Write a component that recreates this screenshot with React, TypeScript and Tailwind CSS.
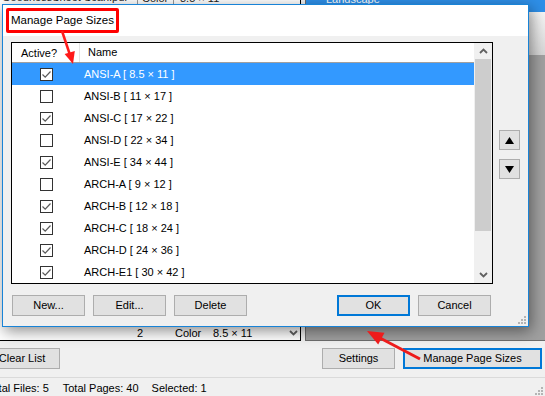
import React from 'react';

const sizes = [
  { name: 'ANSI-A [ 8.5 × 11 ]', on: true },
  { name: 'ANSI-B [ 11 × 17 ]', on: false },
  { name: 'ANSI-C [ 17 × 22 ]', on: true },
  { name: 'ANSI-D [ 22 × 34 ]', on: false },
  { name: 'ANSI-E [ 34 × 44 ]', on: true },
  { name: 'ARCH-A [ 9 × 12 ]', on: false },
  { name: 'ARCH-B [ 12 × 18 ]', on: true },
  { name: 'ARCH-C [ 18 × 24 ]', on: true },
  { name: 'ARCH-D [ 24 × 36 ]', on: true },
  { name: 'ARCH-E1 [ 30 × 42 ]', on: true },
];

function CheckBox({ on }: { on: boolean }) {
  return (
    <div className="flex h-[13px] w-[13px] items-center justify-center border border-[#333333] bg-white">
      {on && (
        <svg width="11" height="11" viewBox="0 0 11 11">
          <path d="M1.5 5.5 L4.2 8.2 L9.5 2.5" fill="none" stroke="#5a5a5a" strokeWidth="1.2" />
        </svg>
      )}
    </div>
  );
}

function Chevron({ down }: { down?: boolean }) {
  return (
    <svg width="9" height="6" viewBox="0 0 9 6" className={down ? 'rotate-180' : ''}>
      <path d="M1 5 L4.5 1.5 L8 5" fill="none" stroke="#606060" strokeWidth="1.8" />
    </svg>
  );
}

function Btn({ children, w, active }: { children: React.ReactNode; w: string; active?: boolean }) {
  return (
    <div
      className={`flex h-[21px] items-center justify-center bg-[#e1e1e1] ${w} ${
        active ? 'border-2 border-[#0078d7]' : 'border border-[#adadad]'
      }`}
    >
      {children}
    </div>
  );
}

function Grip() {
  return (
    <svg width="9" height="9" viewBox="0 0 9 9">
      <rect x="6" y="0" width="2" height="2" fill="#b4b4b4" />
      <rect x="3" y="3" width="2" height="2" fill="#b4b4b4" />
      <rect x="6" y="3" width="2" height="2" fill="#b4b4b4" />
      <rect x="0" y="6" width="2" height="2" fill="#b4b4b4" />
      <rect x="3" y="6" width="2" height="2" fill="#b4b4b4" />
      <rect x="6" y="6" width="2" height="2" fill="#b4b4b4" />
    </svg>
  );
}

export default function App() {
  return (
    <div className="relative h-[396px] w-[545px] overflow-hidden bg-[#f0f0f0] font-['Liberation_Sans',Arial,sans-serif] text-[11px] text-black">
      {/* app behind the dialog */}
      <div className="flex h-[341px]">
        <div className="flex w-[301px] flex-col justify-between border-r border-b border-black bg-white">
          <div className="-mt-[10px] flex h-[14px] items-center text-[#222]">
            <span className="w-[137px] truncate pl-[2px]">GoodnessSheet Scan.pdf</span>
            <span className="h-full w-[36px] border-l border-[#9a9a9a] pl-[4px]">Color</span>
            <span className="h-full flex-1 border-l border-[#9a9a9a] pl-[6px]">8.5 × 11</span>
          </div>
          <div className="flex h-[14px] items-center">
            <span className="w-[145px] pr-[2px] text-right">2</span>
            <span className="w-[30px]"></span>
            <span className="w-[38px]">Color</span>
            <span className="flex-1">8.5 × 11</span>
            <div className="flex w-[14px] justify-center">
              <Chevron down />
            </div>
          </div>
        </div>
        <div className="ml-[4px] flex flex-1 flex-col border-l border-b border-[#6d6d6d]">
          <div className="flex h-[12px] items-start bg-[#2e8fe8] pl-[20px] text-white">
            <span className="-mt-[9px]">Landscape</span>
          </div>
          <div className="h-[43px] bg-gradient-to-b from-[#f5f5f5] to-[#d6d6d6]"></div>
          <div className="flex-1 bg-[#a0a0a0]"></div>
        </div>
      </div>

      <div className="mt-[7px] flex h-[21px]">
        <Btn w="-ml-[16px] w-[76px]">Clear List</Btn>
        <div className="flex-1"></div>
        <Btn w="w-[73px]">Settings</Btn>
        <div className="w-[8px]"></div>
        <Btn w="w-[139px]" active>
          Manage Page Sizes
        </Btn>
        <div className="w-[3px]"></div>
      </div>

      <div className="mt-[8px] flex h-[19px] items-center border-t border-[#dadada] pt-[2px]">
        <span className="-ml-[13px]">Total Files: 5</span>
        <span className="ml-[14px]">Total Pages: 40</span>
        <span className="ml-[13px]">Selected: 1</span>
        <div className="ml-auto mr-[1px] mt-[6px]">
          <Grip />
        </div>
      </div>

      {/* Manage Page Sizes dialog */}
      <div className="absolute left-[2px] top-[4px] flex h-[323px] w-[527px] flex-col border border-[#1883d7] bg-[#f0f0f0] shadow-[2px_4px_14px_rgba(0,0,0,0.45)]">
        <div className="flex h-[31px] items-center bg-white">
          <span className="ml-[3px] -mt-[1px] rounded-[2px] border-[3px] border-[#ff0000] px-[2px] py-[2px] text-[11.5px] leading-[15px]">
            Manage Page Sizes
          </span>
        </div>

        <div className="mt-[6px] flex">
          <div className="ml-[8px] flex h-[242px] w-[482px] border border-black bg-white">
            <div className="flex w-[462px] flex-col">
              <div className="flex h-[20px] items-center border-b border-[#a0a0a0]">
                <span className="h-full w-[68px] border-r border-[#e5e5e5] pl-[9px] leading-[20px]">Active?</span>
                <span className="pl-[8px]">Name</span>
              </div>
              {sizes.map((s, i) => (
                <div
                  key={s.name}
                  className={`flex h-[22px] items-center ${i === 0 ? 'bg-[#3399ff] text-white' : ''}`}
                >
                  <div className="w-[72px] pl-[28px]">
                    <CheckBox on={s.on} />
                  </div>
                  <span>{s.name}</span>
                </div>
              ))}
            </div>
            <div className="flex w-[18px] flex-col bg-[#f0f0f0]">
              <div className="flex h-[16px] items-center justify-center">
                <Chevron />
              </div>
              <div className="mx-[1px] h-[172px] bg-[#cdcdcd]"></div>
              <div className="flex-1"></div>
              <div className="flex h-[16px] items-center justify-center">
                <Chevron down />
              </div>
            </div>
          </div>

          <div className="ml-[6px] flex flex-col gap-[9px] pt-[88px]">
            <div className="flex h-[20px] w-[21px] items-center justify-center border border-[#adadad] bg-[#e1e1e1]">
              <svg width="9" height="7" viewBox="0 0 9 7">
                <path d="M4.5 0 L9 7 L0 7 Z" fill="#000" />
              </svg>
            </div>
            <div className="flex h-[20px] w-[21px] items-center justify-center border border-[#adadad] bg-[#e1e1e1]">
              <svg width="9" height="7" viewBox="0 0 9 7">
                <path d="M0 0 L9 0 L4.5 7 Z" fill="#000" />
              </svg>
            </div>
          </div>
        </div>

        <div className="mt-[11px] flex pl-[9px]">
          <div className="flex gap-[8px]">
            <Btn w="w-[73px]">New...</Btn>
            <Btn w="w-[73px]">Edit...</Btn>
            <Btn w="w-[73px]">Delete</Btn>
          </div>
          <div className="ml-[90px] flex gap-[8px]">
            <Btn w="w-[73px]" active>
              OK
            </Btn>
            <Btn w="w-[73px]">Cancel</Btn>
          </div>
        </div>

        <div className="mt-auto mb-[1px] ml-auto mr-[1px]">
          <Grip />
        </div>
      </div>

      {/* red annotation arrows */}
      <svg className="pointer-events-none absolute left-0 top-0" width="545" height="396">
        <line x1="62" y1="31" x2="70" y2="55" stroke="#ff1a1a" strokeWidth="2.5" />
        <polygon points="73,64 74.8,51 64.6,54" fill="#ff1a1a" />
        <line x1="420" y1="359" x2="380" y2="338" stroke="#ee1c1c" strokeWidth="3" />
        <polygon points="367,331 384.5,332.8 378.2,344.6" fill="#ee1c1c" />
      </svg>
    </div>
  );
}
